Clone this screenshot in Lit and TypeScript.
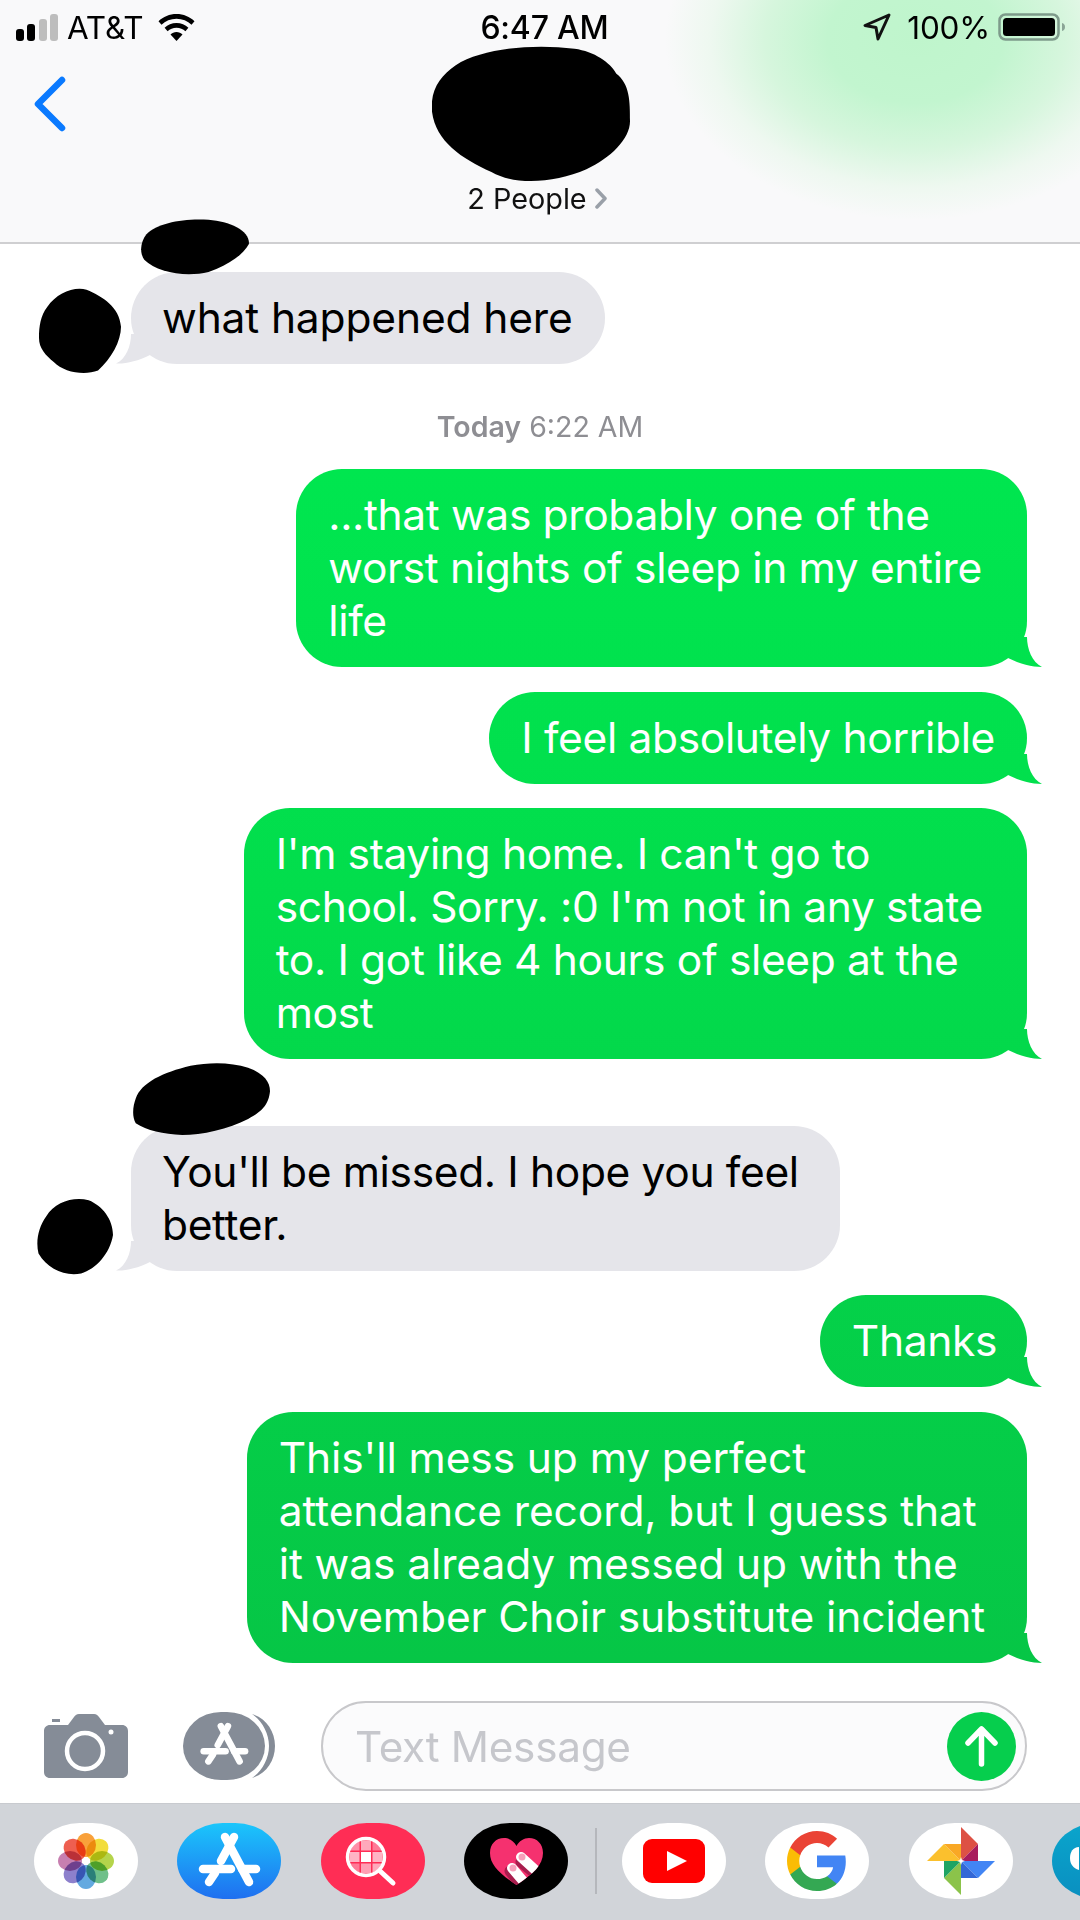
import { LitElement, html, svg, css } from "lit";
import { customElement } from "lit/decorators.js";

const A_ICON = svg`<g fill="none" stroke="#fff" stroke-width="8.500" stroke-linecap="round">
  <path d="M-4 -24 L20 21"/><path d="M5 -24 L-8 0"/><path d="M-14 12 L-20 21"/>
  <path d="M-26 8 L2 8"/><path d="M13 8 L27 8"/></g>`;

// top: gap above the bubble; extra: slack the original wrapped bubble keeps right of its text; ls: tracking.
type Msg = { me: boolean; lines: string; top: number; extra: number; ls?: number };
const MSGS: Msg[] = [
  { me: true, top: 0, extra: 13, lines: "...that was probably one of the\nworst nights of sleep in my entire\nlife" },
  { me: true, top: 25, extra: 0, lines: "I feel absolutely horrible" },
  { me: true, top: 24, extra: 12, lines: "I'm staying home. I can't go to\nschool. Sorry. :0 I'm not in any state\nto. I got like 4 hours of sleep at the\nmost" },
  { me: false, top: 67, extra: 9, lines: "You'll be missed. I hope you feel\nbetter." },
  { me: true, top: 24, extra: -2, lines: "Thanks" },
  { me: true, top: 25, extra: 10, ls: -0.1, lines: "This'll mess up my perfect\nattendance record, but I guess that\nit was already messed up with the\nNovember Choir substitute incident" },
];

const PETALS = ["#f9a13a", "#f2dd3c", "#b5d44b", "#6fc08a", "#63a9e0", "#8d80cc", "#c77fb0", "#ee5f50"];
const CELLS: [number, number, string][] = [
  [-1, -1, "#ff8fa8"], [0, -1, "#ffa9bb"], [1, -1, "#ff7a96"],
  [-1, 0, "#ffb4c4"], [0, 0, "#ffffff"], [1, 0, "#ffb4c4"],
  [-1, 1, "#ff7a96"], [0, 1, "#ff9fb4"], [1, 1, "#ffa9bb"],
];

@customElement("app-root")
export class AppRoot extends LitElement {
  static styles = css`
    :host { display: block; width: 1080px; height: 1920px; position: relative; overflow: hidden; background: #fff;
      font-family: Inter, "Liberation Sans", sans-serif; color: #000; }
    .page { display: flex; flex-direction: column; height: 1920px; }
    header { height: 242px; border-bottom: 2px solid #cfcfd1; flex: none;
      background: radial-gradient(ellipse 250px 180px at 915px 40px, #bff5cc 0%, #c2f5cf 35%, #d6f6dd 60%, #eef8f0 82%, rgba(249,249,250,0) 100%), #f9f9fa;
      display: grid; grid-template-rows: 54px 1fr; }
    .status { display: grid; grid-template-columns: 1fr auto 1fr; align-items: center; font-size: 31.500px; letter-spacing: -.2px; }
    .st-left { display: flex; align-items: center; padding-left: 16px; gap: 9px; }
    .st-right { display: flex; align-items: center; justify-content: flex-end; padding-right: 12px; gap: 8px; }
    .arrow { margin-right: 8px; }
    .time { font-weight: 500; font-size: 32px; margin-left: 9px; }
    .nav { display: grid; grid-template-columns: 1fr auto 1fr; }
    .back { margin: 22px 0 0 33px; display: block; }
    .people { align-self: end; padding: 0 5px 26px 0; font-size: 28.800px; display: flex; align-items: center; gap: 8px; color: #111; }
    .messages { flex: 1; min-height: 0; padding: 28px 53px 0 0; display: flex; flex-direction: column; }
    .stamp { align-self: center; margin: 46px 0 26px 53px; font-size: 28.500px; line-height: 33px; color: #8e8e93; }
    .stamp b { font-weight: 600; }
    .bubble { position: relative; white-space: pre; padding: 18.500px 32px 20.500px; font-size: 42.500px; line-height: 53px; border-radius: 46px; letter-spacing: -.35px; }
    .bubble::after { content: ""; position: absolute; bottom: 0; width: 36px; height: 30px; background: inherit; }
    .me { align-self: flex-end; color: #fff; background: linear-gradient(180deg, #00e64f 0px, #00e64f 470px, #02dd4c 900px, #06c646 1660px) fixed; }
    .me::after { right: -15px; clip-path: path("M21 0C21 12 26 25 36 30C26 30 14 27 2 21L0 0Z"); }
    .them { align-self: flex-start; margin-left: 131px; padding-left: 31px; background: #e5e5ea; }
    .them::after { left: -15px; clip-path: path("M15 0C15 12 10 25 0 29.5C10 30 22 27 34 21L36 0Z"); }
    .first { letter-spacing: -.15px; padding-right: 32px; }
    .composer { flex: none; height: 140px; display: flex; align-items: center; padding: 26px 53px 0 44px; box-sizing: border-box; }
    .camera { flex: none; }
    .apps { flex: none; margin-left: 55px; }
    .input { flex: none; width: 706px; height: 90px; box-sizing: border-box; margin-left: 46px; border: 2.5px solid #c8c8cb; border-radius: 45px; background: #fbfbfc;
      display: flex; align-items: center; justify-content: space-between; padding: 0 9px 0 32px; font-size: 42.300px; color: #c6c7cc; letter-spacing: -.3px; }
    .send { display: block; }
    .dock { flex: none; height: 117px; box-sizing: border-box; background: #d1d4d9; border-top: 1px solid #c8cacf; display: flex; gap: 39.400px; padding: 19px 0 0 34px; overflow: hidden; align-items: flex-start; }
    .app { flex: none; width: 104px; height: 76px; border-radius: 44%/50%; background: #fff; display: flex; align-items: center; justify-content: center; overflow: hidden; }
    .app svg { display: block; }
    .astore { background: linear-gradient(180deg, #1bc6fb, #1f6ff0); }
    .hunt { background: #ff2d55; }
    .love { background: #000; }
    .teal { background: linear-gradient(180deg, #0aa5cc, #0a8fc0); justify-content: flex-start; }
    .sep { flex: none; width: 2px; height: 66px; margin: 5px -14px 0 -13px; background: #b5b7bc; }
    .blob { position: absolute; display: block; }
  `;

  private blob(x: number, y: number, w: number, h: number, d: string) {
    return html`<svg class="blob" style="left:${x}px;top:${y}px" width=${w} height=${h} viewBox="0 0 100 100" preserveAspectRatio="none"><path d=${d} fill="#000"/></svg>`;
  }

  render() {
    return html`<div class="page">
      <header>
        <div class="status">
          <div class="st-left">
            <svg width="42" height="27" viewBox="0 0 42 27"><rect x="0" y="15" width="8" height="12" rx="3"/><rect x="11" y="10" width="8" height="17" rx="3"/><rect x="23" y="5" width="8" height="22" rx="3" fill="#bdbdbd"/><rect x="34" y="0" width="8" height="27" rx="3" fill="#bdbdbd"/></svg>
            <span>AT&amp;T</span>
            <svg width="37" height="27" viewBox="0 0 37 27" style="margin-left:6px"><path d="M18.5 0C11.5 0 5.3 2.7.5 7.2l3 3.5c3.9-3.7 9.2-5.9 15-5.9s11.1 2.2 15 5.9l3-3.5C31.7 2.7 25.500 0 18.500 0z"/><path d="M18.500 9c-4.600 0-8.800 1.800-11.900 4.700l3 3.500c2.300-2.100 5.400-3.400 8.900-3.400s6.600 1.300 8.900 3.400l3-3.500C27.300 10.800 23.100 9 18.500 9z"/><path d="M18.500 18c-2.300 0-4.500.9-6 2.400l6 6.600 6-6.600c-1.500-1.500-3.700-2.400-6-2.400z"/></svg>
          </div>
          <div class="time">6:47 AM</div>
          <div class="st-right">
            <svg class="arrow" width="28" height="28" viewBox="0 0 28 28" fill="none" stroke="#111" stroke-width="3" stroke-linejoin="round"><path d="M26 2L2 12.500l11 2 2 11.500z"/></svg>
            <span>100%</span>
            <svg width="70" height="28" viewBox="0 0 70 28"><rect x="1.500" y="1.500" width="59" height="25" rx="6" fill="none" stroke="#7d9a8a" stroke-width="2.500"/><rect x="5" y="5" width="52" height="18" rx="3.500" fill="#000"/><path d="M64 10c2 .5 3 2 3 4s-1 3.500-3 4z" fill="#8aa596"/></svg>
          </div>
        </div>
        <div class="nav">
          <svg class="back" width="34" height="56" viewBox="0 0 34 56" fill="none" stroke="#0a7aff" stroke-width="6.500" stroke-linecap="round" stroke-linejoin="round"><path d="M29 4L5 28l24 24"/></svg>
          <div class="people"><span>2 People</span><svg width="13" height="21" viewBox="0 0 13 21" fill="none" stroke="#9aa0a8" stroke-width="3.500" stroke-linecap="round" stroke-linejoin="round"><path d="M2 2l8 8.500L2 19"/></svg></div>
          <div></div>
        </div>
      </header>
      <div class="messages">
        <div class="bubble them first">what happened here</div>
        <div class="stamp"><b>Today</b> 6:22 AM</div>
        ${MSGS.map((m) => html`<div class="bubble ${m.me ? "me" : "them"}" style="margin-top:${m.top}px;padding-right:${32 + m.extra}px;${m.ls !== undefined ? `letter-spacing:${m.ls}px` : ""}">${m.lines}</div>`)}
      </div>
      <div class="composer">
        <svg class="camera" width="84" height="64" viewBox="0 0 84 64"><path d="M7 11h17l6-8c1-1.500 2.500-3 5-3h15c2.500 0 4 1.500 5 3l6 8h17c3.500 0 6 2.500 6 6v41c0 3.500-2.500 6-6 6H6c-3.500 0-6-2.500-6-6V17c0-3.500 2.500-6 6-6z" fill="#858c97"/><rect x="8" y="5" width="8" height="3" fill="#858c97"/><circle cx="41" cy="37" r="18" fill="none" stroke="#fff" stroke-width="4.500"/><circle cx="67" cy="18" r="2.500" fill="#fff"/></svg>
        <svg class="apps" width="92" height="68" viewBox="0 0 92 68"><rect width="82" height="68" rx="38" ry="34" fill="#858c97"/><path d="M69 2c14 4 23 17 23 32s-9 28-23 32c10-7 17-19 17-32S79 9 69 2z" fill="#858c97"/><g transform="translate(41 33) scale(.78)">${A_ICON}</g></svg>
        <div class="input"><span>Text Message</span>
          <svg class="send" width="69" height="69" viewBox="0 0 69 69"><circle cx="34.500" cy="34.500" r="34.500" fill="#06ce4d"/><path d="M34.500 52V18M21 31l13.500-14L48 31" fill="none" stroke="#fff" stroke-width="5.500" stroke-linecap="round" stroke-linejoin="round"/></svg>
        </div>
      </div>
      <div class="dock">
        <div class="app"><svg width="60" height="60" viewBox="-30 -30 60 60"><g style="isolation:isolate">
          ${PETALS.map((c, i) => svg`<ellipse cx="0" cy="-16" rx="10" ry="12" fill=${c} transform="rotate(${i * 45})" style="mix-blend-mode:multiply"/>`)}
        </g></svg></div>
        <div class="app astore"><svg width="64" height="60" viewBox="-32 -30 64 60">${A_ICON}</svg></div>
        <div class="app hunt"><svg width="56" height="56" viewBox="0 0 56 56">
          <clipPath id="lens"><circle cx="21" cy="24" r="17"/></clipPath>
          <g clip-path="url(#lens)">${CELLS.map(([c, r, f]) => svg`<rect x=${21 + c * 11.500 - 5} y=${24 + r * 11.500 - 5} width="10" height="10" fill=${f}/>`)}</g>
          <circle cx="21" cy="24" r="18.500" fill="none" stroke="#fff" stroke-width="3.500"/>
          <path d="M35 38l13 12" stroke="#fff" stroke-width="5" stroke-linecap="round"/></svg></div>
        <div class="app love"><svg width="53" height="47" viewBox="0 0 53 47">
          <clipPath id="heart"><path d="M26.500 47C10 36 0 27 0 15 0 6 6 0 14 0c5 0 10 3 12.500 8C29 3 34 0 39 0c8 0 14 6 14 15 0 12-10 21-26.500 32z"/></clipPath>
          <g clip-path="url(#heart)"><rect width="53" height="47" fill="#f5316f"/>
            <path d="M31 24l22 18" stroke="#a81e4e" stroke-width="11" stroke-linecap="round"/><path d="M20 33l14 18" stroke="#a81e4e" stroke-width="11" stroke-linecap="round"/>
            <path d="M31 19l22 20" stroke="#fff" stroke-width="10" stroke-linecap="round"/><path d="M22 30l17 20" stroke="#fff" stroke-width="10" stroke-linecap="round"/>
            <circle cx="32" cy="19" r="3.500" fill="#f7a0bb"/><circle cx="23" cy="30" r="3.500" fill="#f7a0bb"/></g></svg></div>
        <div class="sep"></div>
        <div class="app"><svg width="62" height="44" viewBox="0 0 62 44"><rect width="62" height="44" rx="9" fill="#f00"/><path d="M24 12l20 10-20 10z" fill="#fff"/></svg></div>
        <div class="app"><svg width="60" height="60" viewBox="1 1 22 22"><path d="M22.560 12.250c0-.78-.07-1.530-.2-2.250H12v4.260h5.920c-.26 1.370-1.040 2.530-2.210 3.310v2.770h3.570c2.080-1.920 3.280-4.740 3.280-8.090z" fill="#4285f4"/><path d="M12 23c2.970 0 5.460-.98 7.280-2.660l-3.570-2.770c-.98.66-2.230 1.060-3.710 1.060-2.860 0-5.290-1.930-6.160-4.530H2.180v2.840C3.990 20.530 7.700 23 12 23z" fill="#34a853"/><path d="M5.840 14.090c-.22-.66-.35-1.360-.35-2.090s.13-1.430.35-2.090V7.070H2.180C1.430 8.550 1 10.220 1 12s.43 3.450 1.180 4.930l2.850-2.220.81-.62z" fill="#fbbc05"/><path d="M12 5.380c1.620 0 3.060.56 4.210 1.640l3.150-3.150C17.450 2.090 14.970 1 12 1 7.700 1 3.990 3.470 2.180 7.070l3.660 2.840c.87-2.600 3.300-4.530 6.160-4.530z" fill="#ea4335"/></svg></div>
        <div class="app"><svg width="70" height="70" viewBox="-35 -35 70 70">
          ${[["#dd5144","#a81c5c",0],["#4285f4","#3367d6",90],["#8bc34a","#1fa463",180],["#fbc02d","#f9a825",270]].map(([a,b,r])=>svg`<g transform="rotate(${r})"><path d="M0 0V-34L17 -17z" fill=${a}/><path d="M0 0L17 -17V0z" fill=${b}/></g>`)}
          <path d="M0 -4L1 -1 4 0 1 1 0 4-1 1-4 0-1-1z" fill="#fff"/>
        </svg></div>
        <div class="app teal"><svg width="27" height="76" viewBox="0 0 27 76"><path d="M27 24c-6 0-9 5-9 11s3 10 9 12z" fill="#fff"/></svg></div>
      </div>
    </div>
    ${this.blob(432,46,198,137,"M12 14C25 2 50 -2 72 2C82 4 90 12 93 20C100 28 100 40 100 55C100 68 90 82 78 90C62 100 42 102 30 92C15 82 2 70 0 48C-1 32 4 22 12 14Z")}
    ${this.blob(141,218,109,58,"M5 28C15 8 40 0 62 3C82 6 100 22 99 45C94 62 82 80 62 93C42 102 15 95 3 72C-2 58 0 40 5 28Z")}
    ${this.blob(39,288,82,86,"M10 22C22 6 42 -2 58 2C78 10 98 22 100 45C100 62 88 82 72 96C55 102 30 98 18 86C8 78 0 70 0 58C0 44 2 32 10 22Z")}
    ${this.blob(133,1062,137,73,"M2 50C6 28 22 14 42 5C56 0 72 0 84 8C96 16 100 28 100 40C99 56 96 66 84 78C70 92 50 100 36 100C22 99 10 94 2 84C-1 74 0 60 2 50Z")}
    ${this.blob(37,1198,76,77,"M12 24C24 5 48 -2 68 3C86 10 100 28 100 48C96 72 78 92 58 98C36 102 14 92 2 72C-2 56 2 38 12 24Z")}
    `;
  }
}
